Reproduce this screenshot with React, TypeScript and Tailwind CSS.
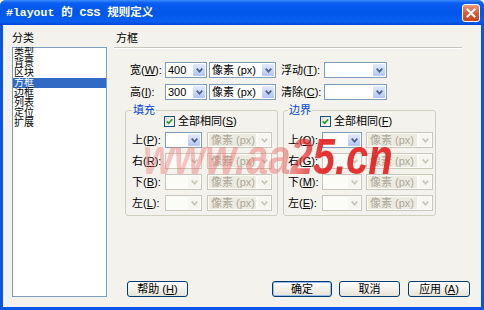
import React from "react";

function Chevron({ color }: { color: string }) {
  return (
    <svg width="7" height="5" viewBox="0 0 7 5" className="block">
      <path d="M0.7 0.7 L3.5 3.7 L6.3 0.7" fill="none" stroke={color} strokeWidth="1.7" />
    </svg>
  );
}

type ComboProps = { className: string; value?: string; disabled?: boolean };

function Combo({ className, value, disabled = false }: ComboProps) {
  return (
    <div
      className={`flex h-[16px] shrink-0 items-stretch border ${
        disabled ? "border-[#c9c7ba] bg-[#fbfbf8]" : "border-[#7f9db9] bg-white"
      } ${className}`}
    >
      <div
        className={`flex min-w-0 flex-1 items-center whitespace-pre pl-[2px] text-[11px] leading-none ${
          disabled && value ? "m-[1px] bg-[#ecebe0] text-[#aca899]" : "text-black"
        }`}
      >
        {value}
      </div>
      <div
        className={`m-[1px] flex w-[12px] items-center justify-center rounded-[1px] ${
          disabled ? "bg-[#f7f6f1]" : "bg-gradient-to-b from-[#e3ebfe] to-[#b1c4f4]"
        }`}
      >
        <Chevron color={disabled ? "#c9c7ba" : "#4d6185"} />
      </div>
    </div>
  );
}

function Check() {
  return (
    <div className="flex h-[11px] w-[11px] shrink-0 items-center justify-center border border-[#1c5180] bg-gradient-to-br from-[#dcdcd6] to-white">
      <svg width="7" height="7" viewBox="0 0 7 7" className="block">
        <path d="M0.8 3.3 L2.7 5.3 L6.2 1.2" fill="none" stroke="#21a121" strokeWidth="1.7" />
      </svg>
    </div>
  );
}

function Key({ children }: { children: React.ReactNode }) {
  return <span className="underline underline-offset-1">{children}</span>;
}

function Label({ className, name, k }: { className: string; name: string; k: string }) {
  return (
    <span className={`shrink-0 whitespace-nowrap text-[11px] leading-none ${className}`}>
      {name}(<Key>{k}</Key>):
    </span>
  );
}

type BoxSpec = {
  title: string;
  same: string;
  rows: [string, string][];
  pad: string;
  labelW: string;
  firstW: string;
  gap: string;
  secondW: string;
};

function GroupBox({ spec }: { spec: BoxSpec }) {
  return (
    <fieldset className={`w-[153px] rounded-[3px] border border-[#d0d0bf] pb-[4px] ${spec.pad}`}>
      <legend className="px-[1px] text-[11px] leading-[12px] text-[#0046d5]">{spec.title}</legend>
      <div className="flex h-[11px] items-center gap-[3px] pl-[32px]">
        <Check />
        <span className="whitespace-nowrap text-[11px] leading-none">
          全部相同(<Key>{spec.same}</Key>)
        </span>
      </div>
      <div className="mt-[5px] flex flex-col gap-[5px]">
        {spec.rows.map(([name, k], i) => (
          <div key={name} className="flex items-center">
            <Label className={spec.labelW} name={name} k={k} />
            <Combo className={spec.firstW} disabled={i > 0} />
            <Combo className={`${spec.secondW} ${spec.gap}`} value="像素 (px)" disabled />
          </div>
        ))}
      </div>
    </fieldset>
  );
}

function Button({ className, children, primary = false }: { className: string; children: React.ReactNode; primary?: boolean }) {
  return (
    <div
      className={`flex h-[16px] items-center justify-center whitespace-pre rounded-[3px] border border-[#003c74] bg-gradient-to-b from-white to-[#e6e3d6] text-[11px] leading-none ${
        primary ? "shadow-[inset_0_0_0_1px_#9ab9ef]" : ""
      } ${className}`}
    >
      {children}
    </div>
  );
}

const categories = ["类型", "背景", "区块", "方框", "边框", "列表", "定位", "扩展"];

const padding: BoxSpec = {
  title: "填充",
  same: "S",
  rows: [
    ["上", "P"],
    ["右", "R"],
    ["下", "B"],
    ["左", "L"],
  ],
  pad: "pl-[6px]",
  labelW: "w-[33px]",
  firstW: "w-[37px]",
  gap: "ml-[5px]",
  secondW: "w-[65px]",
};

const margin: BoxSpec = {
  title: "边界",
  same: "F",
  rows: [
    ["上", "O"],
    ["右", "G"],
    ["下", "M"],
    ["左", "E"],
  ],
  pad: "pl-[4px]",
  labelW: "w-[34px]",
  firstW: "w-[40px]",
  gap: "ml-[4px]",
  secondW: "w-[67px]",
};

export default function App() {
  return (
    <div className="flex h-[310px] w-[484px] flex-col overflow-hidden rounded-t-[6px] bg-[#0a55e6] font-['Liberation_Sans','Noto_Sans_CJK_SC',sans-serif] text-black">
      {/* title bar */}
      <div className="flex h-[25px] shrink-0 items-center justify-between bg-[linear-gradient(to_bottom,#3c8dff_0%,#0a5ef0_12%,#0055ea_50%,#0a5fef_85%,#0047d9_100%)] pl-[6px] pr-[4px]">
        <span className="whitespace-nowrap font-['Liberation_Mono','Noto_Sans_CJK_SC',monospace] text-[11.5px] font-bold leading-none text-white">
          #layout 的 CSS 规则定义
        </span>
        <div className="flex h-[18px] w-[18px] items-center justify-center rounded-[3px] border border-white bg-gradient-to-b from-[#eb9a7c] via-[#d95c35] to-[#c4421d]">
          <svg width="10" height="10" viewBox="0 0 10 10" className="block">
            <path d="M1.5 1.5 L8.5 8.5 M8.5 1.5 L1.5 8.5" stroke="white" strokeWidth="2" strokeLinecap="square" />
          </svg>
        </div>
      </div>

      {/* body */}
      <div className="relative mx-[3px] mb-[3px] flex flex-1 gap-[7px] bg-[#f3f2ec] pb-[10px] pl-[9px] pt-[7px]">
        <div className="flex w-[95px] flex-col">
          <span className="text-[11px] leading-[12px]">分类</span>
          <div className="mt-[3px] flex-1 border border-[#7f9db9] bg-white">
            {categories.map((c) => (
              <div
                key={c}
                className={`h-[10px] pl-[1px] text-[10px] leading-[10px] ${
                  c === "方框" ? "bg-[#316ac5] text-white" : "text-black"
                }`}
              >
                {c}
              </div>
            ))}
          </div>
        </div>

        <div className="flex w-[356px] flex-col">
          <span className="pl-[2px] text-[11px] leading-[12px]">方框</span>
          <div className="mr-[8px] mt-[3px] h-[2px] border-t border-[#c5c5bd] bg-white" />

          <div className="ml-[16px] mt-[13px] flex flex-col gap-[6px]">
            <div className="flex items-center">
              <Label className="w-[35px]" name="宽" k="W" />
              <Combo className="w-[42px]" value="400" />
              <Combo className="ml-[2px] w-[67px]" value="像素 (px)" />
              <Label className="ml-[5px] w-[43px]" name="浮动" k="T" />
              <Combo className="w-[63px]" />
            </div>
            <div className="flex items-center">
              <Label className="w-[35px]" name="高" k="I" />
              <Combo className="w-[42px]" value="300" />
              <Combo className="ml-[2px] w-[67px]" value="像素 (px)" />
              <Label className="ml-[5px] w-[43px]" name="清除" k="C" />
              <Combo className="w-[63px]" />
            </div>
          </div>

          <div className="ml-[11px] mt-[4px] flex gap-[5px]">
            <GroupBox spec={padding} />
            <GroupBox spec={margin} />
          </div>

          <div className="mt-auto flex">
            <Button className="ml-[13px] w-[61px]">
              帮助 (<Key>H</Key>)
            </Button>
            <Button className="ml-auto w-[60px]" primary>
              确定
            </Button>
            <Button className="ml-[7px] w-[61px]">取消</Button>
            <Button className="ml-[8px] w-[62px]">
              应用 (<Key>A</Key>)
            </Button>
          </div>
        </div>

        {/* watermark */}
        <span className="pointer-events-none absolute left-[140px] top-[107px] origin-left scale-x-[0.8] whitespace-nowrap bg-[linear-gradient(90deg,rgba(236,120,120,0.4)_0%,rgba(236,100,100,0.45)_55%,rgba(226,24,24,0.88)_72%)] bg-clip-text text-[50px] font-bold italic leading-none text-transparent">
          www.aa25.cn
        </span>
      </div>
    </div>
  );
}
